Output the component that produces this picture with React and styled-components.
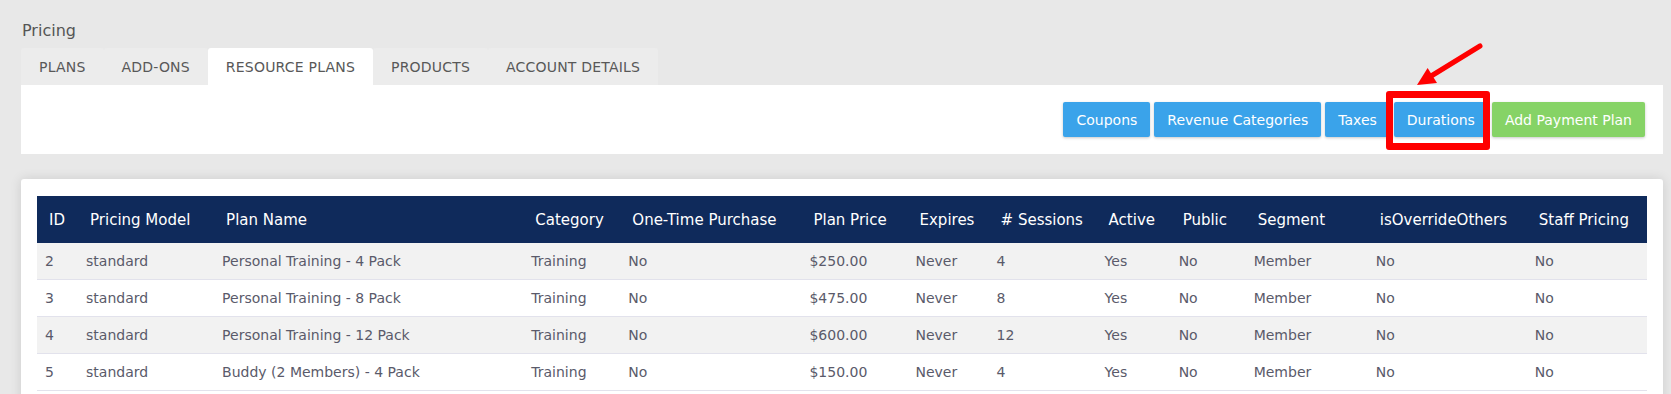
import React from "react";
import styled, { createGlobalStyle } from "styled-components";

const GlobalStyle = createGlobalStyle`
  body {
    margin: 0;
    background: #e8e8e8;
    font-family: "DejaVu Sans", "Open Sans", sans-serif;
    color: #555;
  }
`;

const columns = [
  { key: "id", label: "ID", width: 41 },
  { key: "model", label: "Pricing Model", width: 136 },
  { key: "name", label: "Plan Name", width: 309 },
  { key: "category", label: "Category", width: 97 },
  { key: "oneTime", label: "One-Time Purchase", width: 181 },
  { key: "price", label: "Plan Price", width: 106 },
  { key: "expires", label: "Expires", width: 81 },
  { key: "sessions", label: "# Sessions", width: 108 },
  { key: "active", label: "Active", width: 74 },
  { key: "public", label: "Public", width: 75 },
  { key: "segment", label: "Segment", width: 122 },
  { key: "override", label: "isOverrideOthers", width: 159 },
  { key: "staff", label: "Staff Pricing", width: 120 },
];

const base = {
  model: "standard",
  category: "Training",
  oneTime: "No",
  expires: "Never",
  active: "Yes",
  public: "No",
  segment: "Member",
  override: "No",
  staff: "No",
};

const plans = [
  { ...base, id: 2, name: "Personal Training - 4 Pack", price: "$250.00", sessions: 4 },
  { ...base, id: 3, name: "Personal Training - 8 Pack", price: "$475.00", sessions: 8 },
  { ...base, id: 4, name: "Personal Training - 12 Pack", price: "$600.00", sessions: 12 },
  { ...base, id: 5, name: "Buddy (2 Members) - 4 Pack", price: "$150.00", sessions: 4 },
];

const tabs = ["Plans", "Add-ons", "Resource Plans", "Products", "Account Details"];

const App = () => {
  return (
    <>
      <GlobalStyle />
      <Page>
        <Title>Pricing</Title>
        <Tabs>
          {tabs.map((t) => (
            <Tab key={t} active={t === "Resource Plans"}>
              {t}
            </Tab>
          ))}
        </Tabs>
        <Toolbar>
          <Button>Coupons</Button>
          <Button>Revenue Categories</Button>
          <Button>Taxes</Button>
          <Marked>
            <Button>Durations</Button>
            <Highlight />
            <Arrow width="76" height="50" viewBox="0 0 76 50">
              <line
                x1="70"
                y1="5"
                x2="22"
                y2="34.5"
                stroke="#ff0000"
                strokeWidth="5"
                strokeLinecap="round"
              />
              <polygon points="7,44 17.6,27 27,42" fill="#ff0000" />
            </Arrow>
          </Marked>
          <Button green>Add Payment Plan</Button>
        </Toolbar>
        <Card>
          <Table>
            <colgroup>
              {columns.map((c) => (
                <col key={c.key} style={{ width: c.width }} />
              ))}
            </colgroup>
            <thead>
              <tr>
                {columns.map((c) => (
                  <Th key={c.key}>{c.label}</Th>
                ))}
              </tr>
            </thead>
            <tbody>
              {plans.map((p, i) => (
                <Row key={p.id} striped={i % 2 === 0}>
                  {columns.map((c) => (
                    <Td key={c.key}>{p[c.key]}</Td>
                  ))}
                </Row>
              ))}
            </tbody>
          </Table>
        </Card>
      </Page>
    </>
  );
};

export default App;

const Page = styled.div`
  padding: 20px 8px 0 21px;
`;

const Title = styled.div`
  font-size: 16px;
  line-height: 22px;
  color: #555;
  margin-bottom: 6px;
  padding-left: 1px;
`;

const Tabs = styled.div`
  display: flex;
`;

const Tab = styled.div`
  height: 37px;
  padding: 0 18px;
  display: flex;
  align-items: center;
  font-size: 14px;
  letter-spacing: 0.2px;
  text-transform: uppercase;
  color: #585858;
  background: ${(p) => (p.active ? "#ffffff" : "#ececec")};
  border-radius: 3px 3px 0 0;
`;

const Toolbar = styled.div`
  background: #fff;
  display: flex;
  justify-content: flex-end;
  align-items: center;
  height: 69px;
  padding: 0 18px;
  box-sizing: border-box;
`;

const Button = styled.button`
  height: 35px;
  padding: 0 13px;
  margin-left: 4px;
  border: none;
  border-radius: 2px;
  background: ${(p) => (p.green ? "#86d366" : "#3aa3ea")};
  color: #fff;
  font-family: inherit;
  font-size: 14px;
  box-shadow: 0 1px 3px rgba(0, 0, 0, 0.22);
`;

const Marked = styled.div`
  position: relative;
  display: flex;
`;

const Highlight = styled.div`
  position: absolute;
  top: -11px;
  left: -4px;
  right: -2px;
  bottom: -13px;
  border: 7px solid #ff0000;
  border-radius: 3px;
  pointer-events: none;
`;

const Arrow = styled.svg`
  position: absolute;
  left: 20px;
  top: -61px;
`;

const Card = styled.div`
  margin-top: 25px;
  background: #fff;
  padding: 17px 16px;
  border-radius: 3px;
  box-shadow: 0 0 12px rgba(0, 0, 0, 0.12);
`;

const Table = styled.table`
  width: 100%;
  border-collapse: collapse;
  table-layout: fixed;
`;

const Th = styled.th`
  height: 47px;
  background: #0f2a5b;
  color: #fff;
  font-size: 15px;
  font-weight: 400;
  text-align: left;
  padding: 0 0 0 12px;
  white-space: nowrap;
`;

const Row = styled.tr`
  background: ${(p) => (p.striped ? "#f2f2f2" : "#ffffff")};
  border-bottom: 1px solid #e2e2ec;
`;

const Td = styled.td`
  height: 36px;
  padding: 0 0 0 8px;
  font-size: 14px;
  color: #5a5a6a;
  white-space: nowrap;
`;
